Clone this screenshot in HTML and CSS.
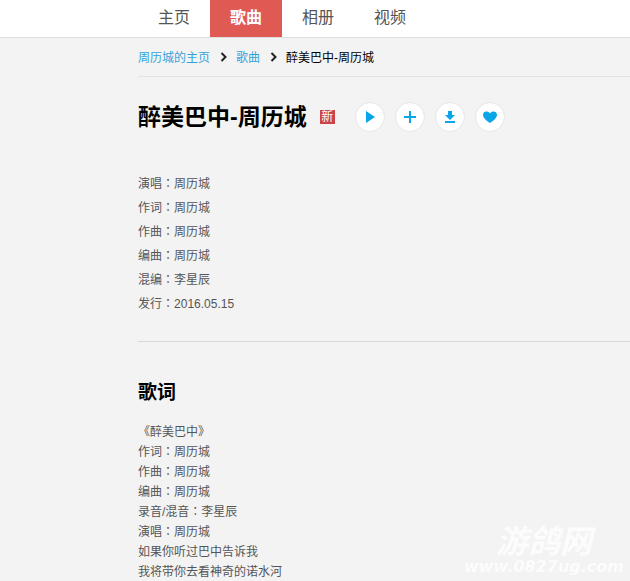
FILE: index.html
```html
<!DOCTYPE html>
<html lang="zh-CN">
<head>
    <meta charset="UTF-8">
    <meta name="viewport" content="width=device-width, initial-scale=1.0">
    <title>醉美巴中-周历城</title>
    <link rel="stylesheet" href="styles.css">
</head>
<body>
    <header class="topbar">
        <nav class="tabs">
            <a href="#home">主页</a>
            <a href="#songs" class="active">歌曲</a>
            <a href="#albums">相册</a>
            <a href="#videos">视频</a>
        </nav>
    </header>
    <main class="content">
        <nav class="breadcrumb">
            <a href="#home">周历城的主页</a>
            <svg class="arrow" width="8" height="10" viewBox="0 0 8 10"><path d="M1.500 1L5.500 5L1.500 9" /></svg>
            <a href="#songs">歌曲</a>
            <svg class="arrow" width="8" height="10" viewBox="0 0 8 10"><path d="M1.500 1L5.500 5L1.500 9" /></svg>
            <span>醉美巴中-周历城</span>
        </nav>
        <section class="song">
            <div class="songhead">
                <h1>醉美巴中-周历城</h1>
                <span class="new">新</span>
                <div class="actions">
                    <button type="button" aria-label="播放">
                        <svg width="16" height="16" viewBox="0 0 16 16"><path d="M4 2L13 8L4 14Z" /></svg>
                    </button>
                    <button type="button" aria-label="添加">
                        <svg width="16" height="16" viewBox="0 0 16 16"><path d="M7 2H9V7H14V9H9V14H7V9H2V7H7Z" /></svg>
                    </button>
                    <button type="button" aria-label="下载">
                        <svg width="16" height="16" viewBox="0 0 16 16"><path d="M6 2H10V6H13L8 11L3 6H6ZM3 12H13V14H3Z" /></svg>
                    </button>
                    <button type="button" aria-label="收藏">
                        <svg width="16" height="16" viewBox="0 0 16 16"><path d="M8 14C5 12 1 9 1 6C1 2 6 1.500 8 4.500C10 1.500 15 2 15 6C15 9 11 12 8 14Z" /></svg>
                    </button>
                </div>
            </div>
            <ul class="info">
                <li>演唱<span class="colon" lang="zh-TW">：</span>周历城</li>
                <li>作词<span class="colon" lang="zh-TW">：</span>周历城</li>
                <li>作曲<span class="colon" lang="zh-TW">：</span>周历城</li>
                <li>编曲<span class="colon" lang="zh-TW">：</span>周历城</li>
                <li>混编<span class="colon" lang="zh-TW">：</span>李星辰</li>
                <li>发行<span class="colon" lang="zh-TW">：</span>2016.05.15</li>
            </ul>
        </section>
        <section class="lyrics">
            <h2>歌词</h2>
            <p>
                《醉美巴中》<br>
                作词<span class="colon" lang="zh-TW">：</span>周历城<br>
                作曲<span class="colon" lang="zh-TW">：</span>周历城<br>
                编曲<span class="colon" lang="zh-TW">：</span>周历城<br>
                录音/混音<span class="colon" lang="zh-TW">：</span>李星辰<br>
                演唱<span class="colon" lang="zh-TW">：</span>周历城<br>
                如果你听过巴中告诉我<br>
                我将带你去看神奇的诺水河
            </p>
        </section>
    </main>
    <div class="watermark">
        <span class="site">游鸽网</span>
        <span class="url">www.0827ug.com</span>
    </div>
</body>
</html>
```

FILE: styles.css
```css
body {
    margin: 0;
    font-family: "Liberation Sans", "Noto Sans CJK SC", sans-serif;
    font-size: 12px;
    color: #555;
    background-color: #f3f3f3;
}
a {
    color: #33a3dc;
    text-decoration: none;
}
.topbar {
    background-color: #fff;
    border-bottom: 1px solid #dedede;
    padding-left: 138px;
}
.tabs {
    display: flex;
}
.tabs a {
    padding: 0 20px;
    font-size: 16px;
    line-height: 36px;
    height: 37px;
    color: #555;
}
.tabs .active {
    background-color: #e05a54;
    color: #fff;
    font-weight: bold;
}
.content {
    padding-left: 138px;
}
.breadcrumb {
    display: flex;
    align-items: center;
    height: 38px;
    border-bottom: 1px solid #e2e2e2;
    color: #000;
}
.breadcrumb a,
.breadcrumb span {
    padding-bottom: 2px;
}
.arrow {
    margin: 0 8px 0 10px;
    fill: none;
    stroke: #222;
    stroke-width: 2;
}
.song {
    padding: 24px 0 25px;
    border-bottom: 1px solid #d8d8d8;
}
.songhead {
    display: flex;
    align-items: center;
}
h1 {
    margin: 0;
    font-size: 23px;
    line-height: 32px;
    color: #000;
}
.new {
    width: 15px;
    margin: 0 20px 0 13px;
    background-color: #cb4548;
    color: #fff;
    line-height: 14px;
    text-align: center;
}
.actions {
    display: flex;
    gap: 10px;
}
.actions button {
    display: flex;
    align-items: center;
    justify-content: center;
    width: 30px;
    height: 30px;
    padding: 0;
    border: 1px solid #e6e6e6;
    border-radius: 50%;
    background-color: #fff;
    fill: #0aa5e8;
}
.info {
    list-style: none;
    margin: 39px 0 0;
    padding: 0;
    line-height: 24px;
}
.colon {
    font-family: "Noto Sans CJK TC", sans-serif;
    line-height: 1;
}
.lyrics h2 {
    margin: 0;
    padding: 36px 0 14px;
    font-size: 19px;
    line-height: 30px;
    color: #000;
}
.lyrics p {
    margin: 0;
    line-height: 20px;
}
.watermark {
    position: fixed;
    right: 6px;
    bottom: 4px;
    display: flex;
    flex-direction: column;
    align-items: center;
    color: #fcfcfc;
    font-style: italic;
    font-weight: bold;
}
.site {
    font-size: 32px;
    line-height: 30px;
}
.url {
    font-family: "DejaVu Sans", sans-serif;
    font-size: 16px;
    line-height: 20px;
}
```
